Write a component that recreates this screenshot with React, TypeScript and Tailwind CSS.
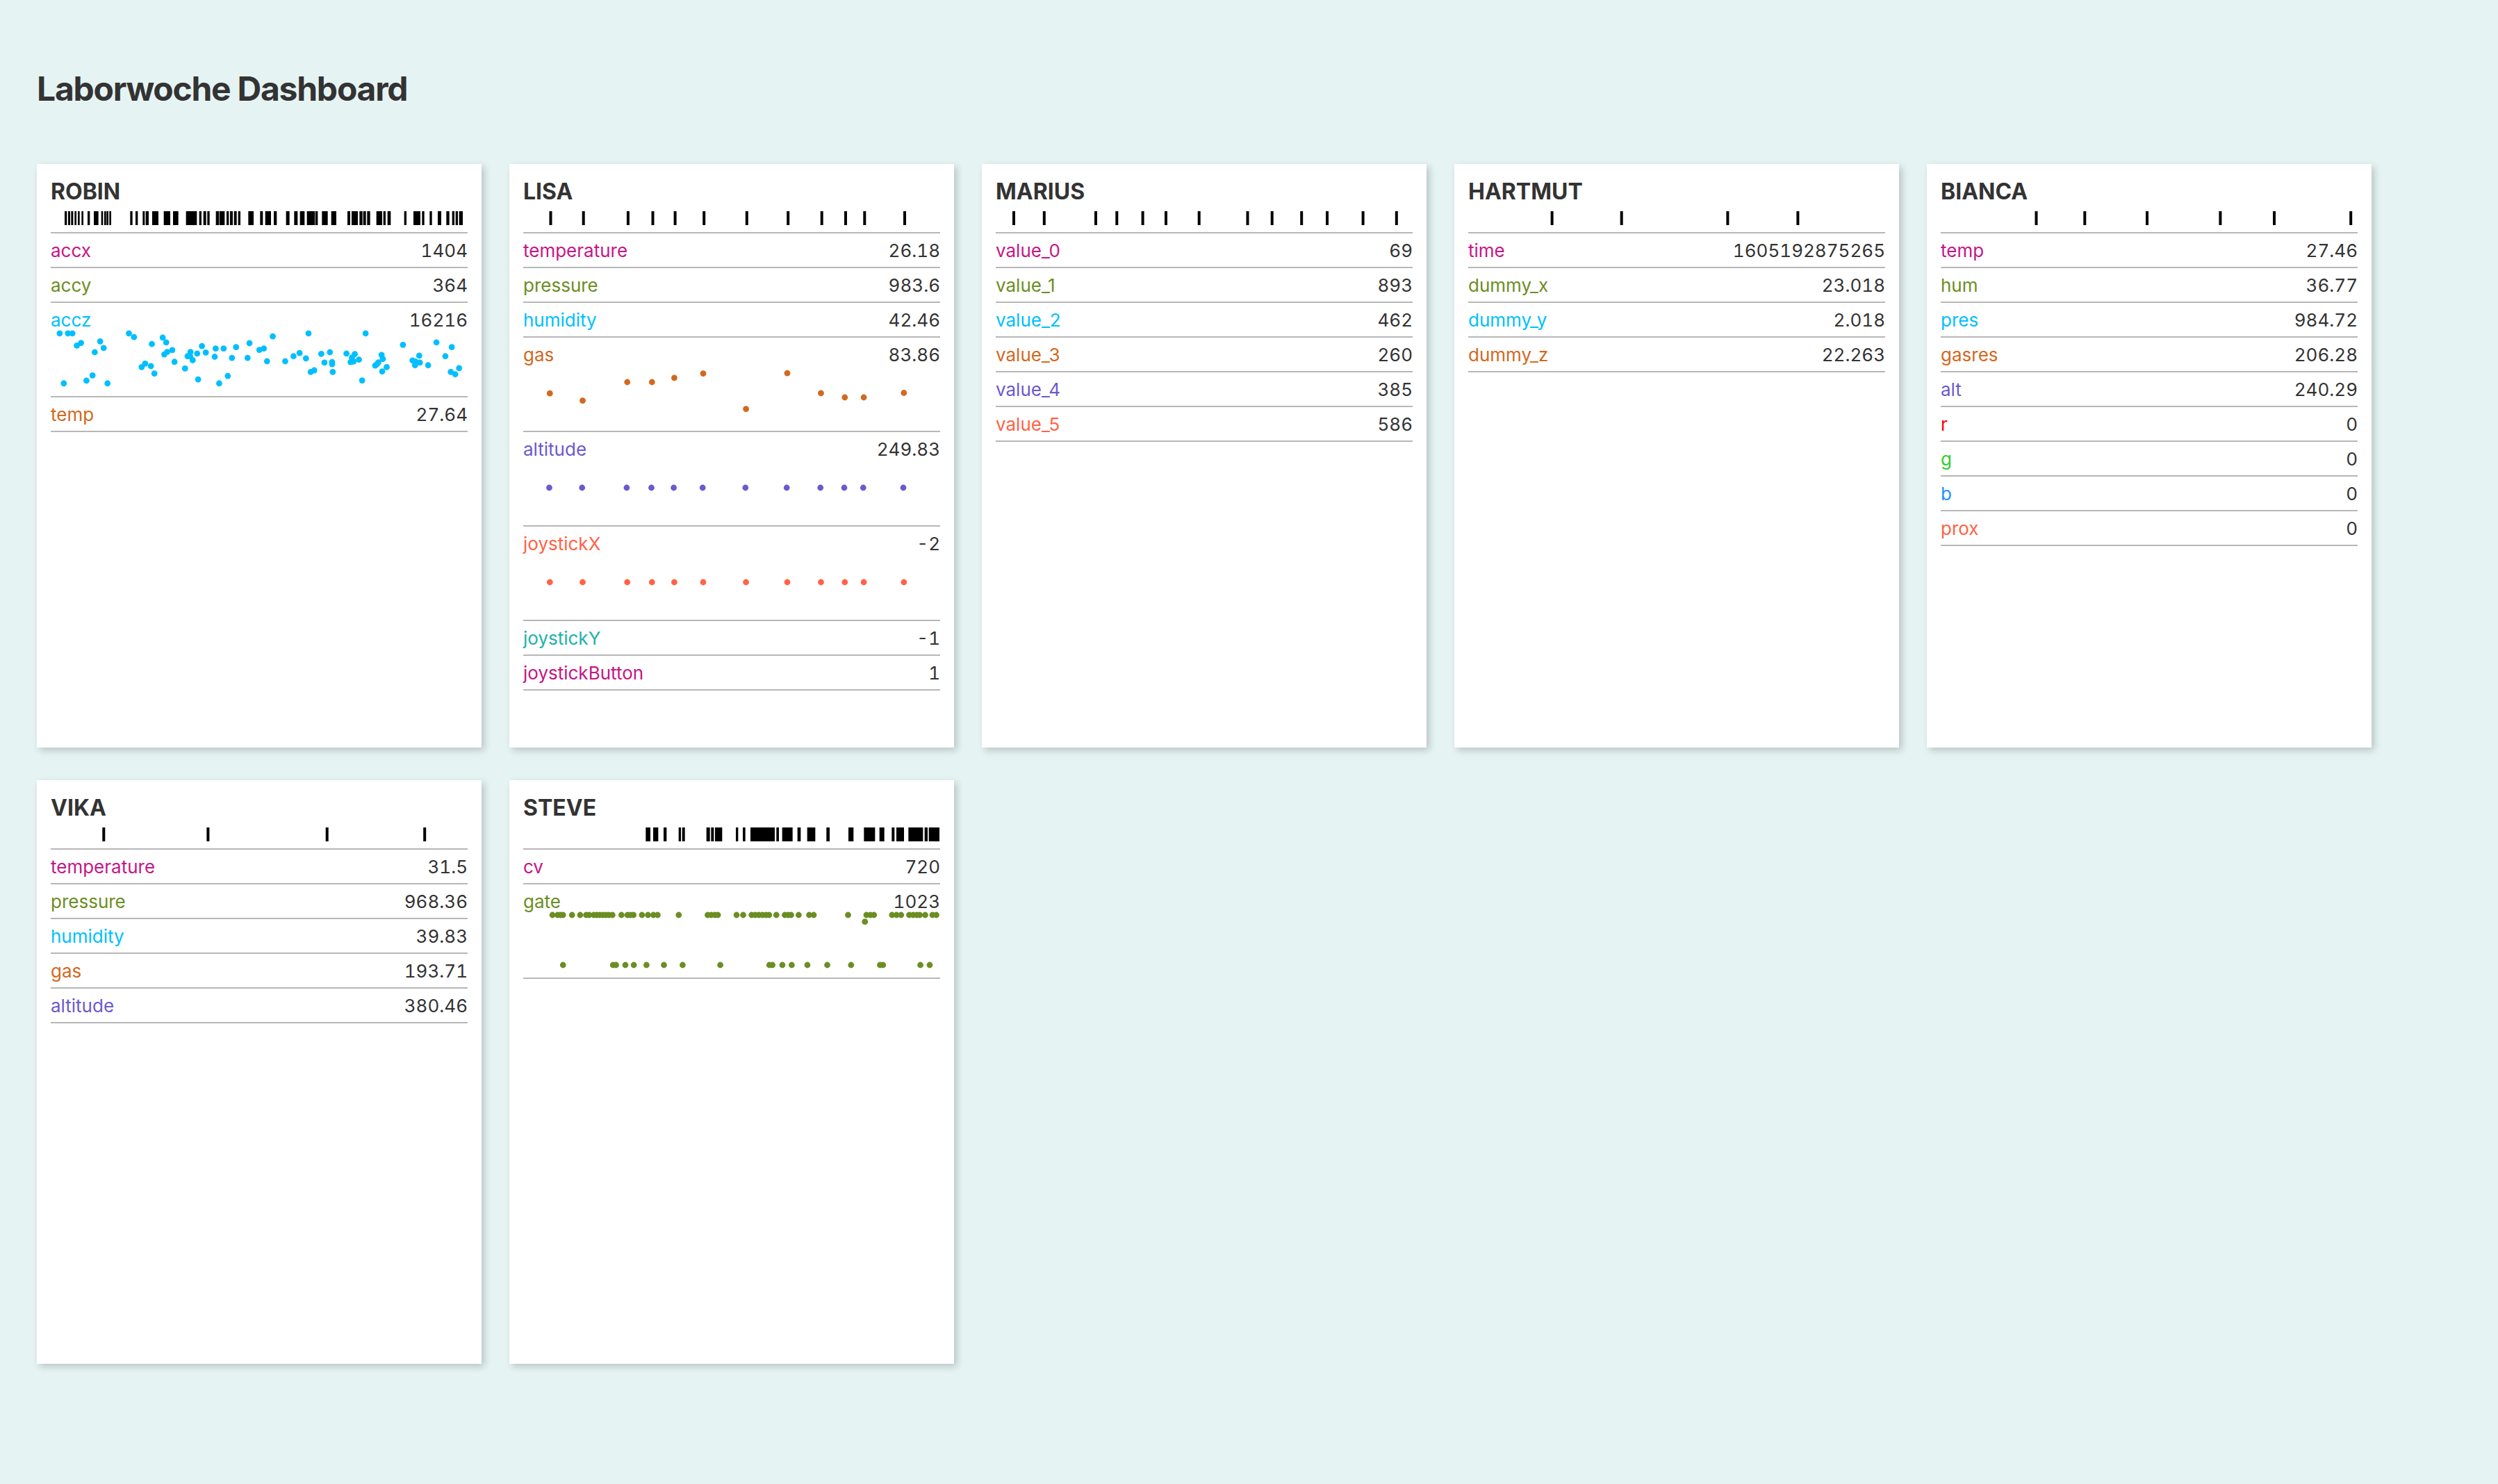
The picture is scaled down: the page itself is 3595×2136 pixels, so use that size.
const PINK = "text-[#c71585]";
const OLIVE = "text-[#6b8e23]";
const SKY = "text-[#00bfff]";
const CHOCOLATE = "text-[#d2691e]";
const SLATE = "text-[#6a5acd]";
const TOMATO = "text-[#ff6347]";
const SEA = "text-[#20b2aa]";
const RED = "text-[#ff0000]";
const LIME = "text-[#32cd32]";
const BLUE = "text-[#1e90ff]";

type Dot = [number, number];
type Row = { name: string; value: string; color: string; dots?: Dot[] };
type Sensor = { name: string; rug: [number, number][]; rows: Row[] };

// rug positions are content x, one stroke per reading
const ticks = (xs: number[]): [number, number][] => xs.map((x) => [x - 2, x + 2]);

const lisaTicks = [39.5, 86.7, 150.9, 186.5, 218.6, 260.2, 321.8, 381.2, 429.7, 464, 491.3, 549];
const lisaGas = [81.2, 91.6, 65, 65, 58.8, 52.6, 103.6, 52.2, 80.9, 87, 87, 80.5];

const robinRug: [number, number][] = [
  ...[
    [69, 79], [84, 93], [97, 106], [112, 120], [126, 134], [142, 150], [168, 178], [195, 215],
    [227, 235], [240, 248], [250, 258], [262, 270], [352, 362], [375, 385], [406, 415], [419, 432],
    [447, 474], [497, 525], [537, 560], [593, 640], [650, 660], [668, 680], [685, 695], [722, 735],
    [737, 760], [768, 778], [783, 795], [800, 812], [818, 828], [862, 885], [913, 925],
  ].map(([a, b]): [number, number] => [a / 3 - 3, b / 3 - 3]),
  ...[
    [5, 30], [42, 55], [95, 110], [130, 145], [155, 175], [185, 220], [222, 232], [250, 275],
    [290, 312], [360, 372], [378, 405], [412, 425], [428, 440], [445, 458], [485, 510], [515, 525],
    [533, 547], [605, 615], [645, 675], [682, 692], [715, 725], [750, 765], [787, 800], [812, 822],
    [827, 837], [842, 858],
  ].map(([a, b]): [number, number] => [a / 3 + 307, b / 3 + 307]),
];

const steveRug: [number, number][] = [
  [28, 48], [60, 82], [105, 118], [170, 180], [185, 197], [290, 305], [310, 322], [327, 358],
  [417, 427], [447, 458], [480, 585], [592, 603], [617, 662], [683, 697], [725, 760], [808, 822],
  [903, 925], [970, 1018], [1037, 1058], [1090, 1102], [1110, 1143], [1162, 1225], [1232, 1245],
  [1250, 1296],
].map(([a, b]) => [a / 3 + 167, b / 3 + 167]);

const acczDots: Dot[] = [
  [188, 1097], [214, 1097], [228, 1097], [242, 1143], [255, 1133], [315, 1127], [326, 1152], [298, 1168],
  [201, 1285], [272, 1275], [291, 1255], [338, 1285], [405, 1097], [421, 1111], [477, 1137], [511, 1113],
  [522, 1131], [445, 1224], [456, 1211], [474, 1220], [485, 1248], [516, 1176], [525, 1167], [541, 1160],
  [548, 1204], [581, 1229], [589, 1183], [598, 1167], [597, 1183], [605, 1198], [619, 1173], [634, 1145],
  [646, 1169], [622, 1270], [674, 1185], [677, 1154], [702, 1154], [688, 1285], [715, 1257], [728, 1189],
  [741, 1149], [777, 1189], [783, 1134], [814, 1159], [828, 1154], [838, 1202], [856, 1108], [895, 1202],
  [921, 1183], [940, 1171], [960, 1191], [968, 1097], [975, 1242], [986, 1236], [1008, 1174], [1018, 1207],
  [1035, 1168], [1042, 1205], [1042, 1213], [1044, 1242], [1087, 1173], [1100, 1205], [1104, 1188],
  [1109, 1203], [1113, 1175], [1126, 1196], [1136, 1274], [1147, 1097], [1177, 1218], [1183, 1212],
  [1187, 1206], [1197, 1178], [1201, 1193], [1199, 1240], [1213, 1224], [1264, 1140], [1294, 1199],
  [1303, 1203], [1302, 1217], [1315, 1181], [1317, 1207], [1343, 1217], [1369, 1131], [1397, 1183],
  [1417, 1149], [1414, 1242], [1428, 1251], [1440, 1228],
].map(([x, y]) => [(x - 160) / 2.178, y / 2.613 + 60 - 435]);

const gateTop = [
  173, 190, 200, 208, 238, 265, 285, 295, 310, 320, 330, 340, 350, 360, 372, 402, 422, 432, 442, 470, 490,
  508, 522, 592, 688, 700, 712, 722, 784, 806, 834, 846, 858, 870, 882, 892, 916, 944, 955, 965, 990, 1025,
  1040, 1154, 1215, 1228, 1240, 1300, 1315, 1330, 1357, 1370, 1382, 1392, 1410, 1434, 1447,
];
const gateBottom = [
  208, 374, 384, 415, 443, 485, 543, 605, 730, 893, 903, 936, 967, 1019, 1085, 1164, 1260, 1270, 1394, 1425,
];
const gateDots: Dot[] = [
  ...gateTop.map((x): Dot => [(x - 76) / 2.306, 45]),
  [(1210 - 76) / 2.306, 54.7],
  ...gateBottom.map((x): Dot => [(x - 76) / 2.306, 117]),
];

const sensors: Sensor[] = [
  {
    name: "ROBIN",
    rug: robinRug,
    rows: [
      { name: "accx", value: "1404", color: PINK },
      { name: "accy", value: "364", color: OLIVE },
      { name: "accz", value: "16216", color: SKY, dots: acczDots },
      { name: "temp", value: "27.64", color: CHOCOLATE },
    ],
  },
  {
    name: "LISA",
    rug: ticks(lisaTicks),
    rows: [
      { name: "temperature", value: "26.18", color: PINK },
      { name: "pressure", value: "983.6", color: OLIVE },
      { name: "humidity", value: "42.46", color: SKY },
      {
        name: "gas",
        value: "83.86",
        color: CHOCOLATE,
        dots: lisaTicks.map((x, i): Dot => [x - 1.2, lisaGas[i]]),
      },
      { name: "altitude", value: "249.83", color: SLATE, dots: lisaTicks.map((x): Dot => [x - 2, 81]) },
      { name: "joystickX", value: "-2", color: TOMATO, dots: lisaTicks.map((x): Dot => [x - 1.2, 81]) },
      { name: "joystickY", value: "-1", color: SEA },
      { name: "joystickButton", value: "1", color: PINK },
    ],
  },
  {
    name: "MARIUS",
    rug: ticks([26, 69.8, 144, 174.3, 211.6, 245, 292.7, 362.5, 397.7, 440.2, 477, 528.6, 576.8]),
    rows: [
      { name: "value_0", value: "69", color: PINK },
      { name: "value_1", value: "893", color: OLIVE },
      { name: "value_2", value: "462", color: SKY },
      { name: "value_3", value: "260", color: CHOCOLATE },
      { name: "value_4", value: "385", color: SLATE },
      { name: "value_5", value: "586", color: TOMATO },
    ],
  },
  {
    name: "HARTMUT",
    rug: ticks([120.6, 220.7, 373.4, 474.4]),
    rows: [
      { name: "time", value: "1605192875265", color: PINK },
      { name: "dummy_x", value: "23.018", color: OLIVE },
      { name: "dummy_y", value: "2.018", color: SKY },
      { name: "dummy_z", value: "22.263", color: CHOCOLATE },
    ],
  },
  {
    name: "BIANCA",
    rug: ticks([137.5, 207.3, 297, 402.4, 480, 590.2]),
    rows: [
      { name: "temp", value: "27.46", color: PINK },
      { name: "hum", value: "36.77", color: OLIVE },
      { name: "pres", value: "984.72", color: SKY },
      { name: "gasres", value: "206.28", color: CHOCOLATE },
      { name: "alt", value: "240.29", color: SLATE },
      { name: "r", value: "0", color: RED },
      { name: "g", value: "0", color: LIME },
      { name: "b", value: "0", color: BLUE },
      { name: "prox", value: "0", color: TOMATO },
    ],
  },
  {
    name: "VIKA",
    rug: ticks([76.3, 226.4, 397.7, 538.2]),
    rows: [
      { name: "temperature", value: "31.5", color: PINK },
      { name: "pressure", value: "968.36", color: OLIVE },
      { name: "humidity", value: "39.83", color: SKY },
      { name: "gas", value: "193.71", color: CHOCOLATE },
      { name: "altitude", value: "380.46", color: SLATE },
    ],
  },
  {
    name: "STEVE",
    rug: steveRug as [number, number][],
    rows: [
      { name: "cv", value: "720", color: PINK },
      { name: "gate", value: "1023", color: OLIVE, dots: gateDots },
    ],
  },
];

function Rug({ bars }: { bars: [number, number][] }) {
  return (
    <svg viewBox="0 0 600 20" className="block h-5 w-full fill-black">
      {bars.map(([a, b], i) => (
        <rect key={i} x={a} y={0} width={b - a} height={20} />
      ))}
    </svg>
  );
}

// y values count from the rule above the row, hence the 49 in the viewBox
function Plot({ dots, color }: { dots: Dot[]; color: string }) {
  return (
    <svg viewBox="0 49 600 86" className={`block h-[86px] w-full overflow-visible fill-current ${color}`}>
      {dots.map(([x, y], i) => (
        <circle key={i} cx={x} cy={y} r={4.4} />
      ))}
    </svg>
  );
}

function SensorCard({ sensor }: { sensor: Sensor }) {
  return (
    <div className="h-[840px] bg-white p-5 shadow-[4px_4px_10px_rgba(0,0,0,0.2)]">
      <h2 className="h-[39px] text-[32px] leading-[39px] font-bold text-[#333]">{sensor.name}</h2>
      <div className="mt-[9px] border-b-2 border-[#b7b7b7] pb-[10px]">
        <Rug bars={sensor.rug} />
      </div>
      {sensor.rows.map((row) => (
        <div key={row.name} className="border-b-2 border-[#b7b7b7]">
          <div className="flex h-12 items-center justify-between text-[26px]">
            <span className={row.color}>{row.name}</span>
            <span className="text-[#333] tabular-nums">{row.value}</span>
          </div>
          {row.dots && <Plot dots={row.dots} color={row.color} />}
        </div>
      ))}
    </div>
  );
}

export default function App() {
  return (
    <div className="min-h-[2136px] bg-[#e5f4f3] px-[53px] pt-[100px] font-['Inter',sans-serif]">
      <h1 className="mb-20 h-14 text-[48px] leading-[56px] font-bold tracking-[-1.25px] text-[#333]">
        Laborwoche Dashboard
      </h1>
      <div className="grid grid-cols-[repeat(5,640px)] gap-x-10 gap-y-[47px]">
        {sensors.map((sensor) => (
          <SensorCard key={sensor.name} sensor={sensor} />
        ))}
      </div>
    </div>
  );
}
